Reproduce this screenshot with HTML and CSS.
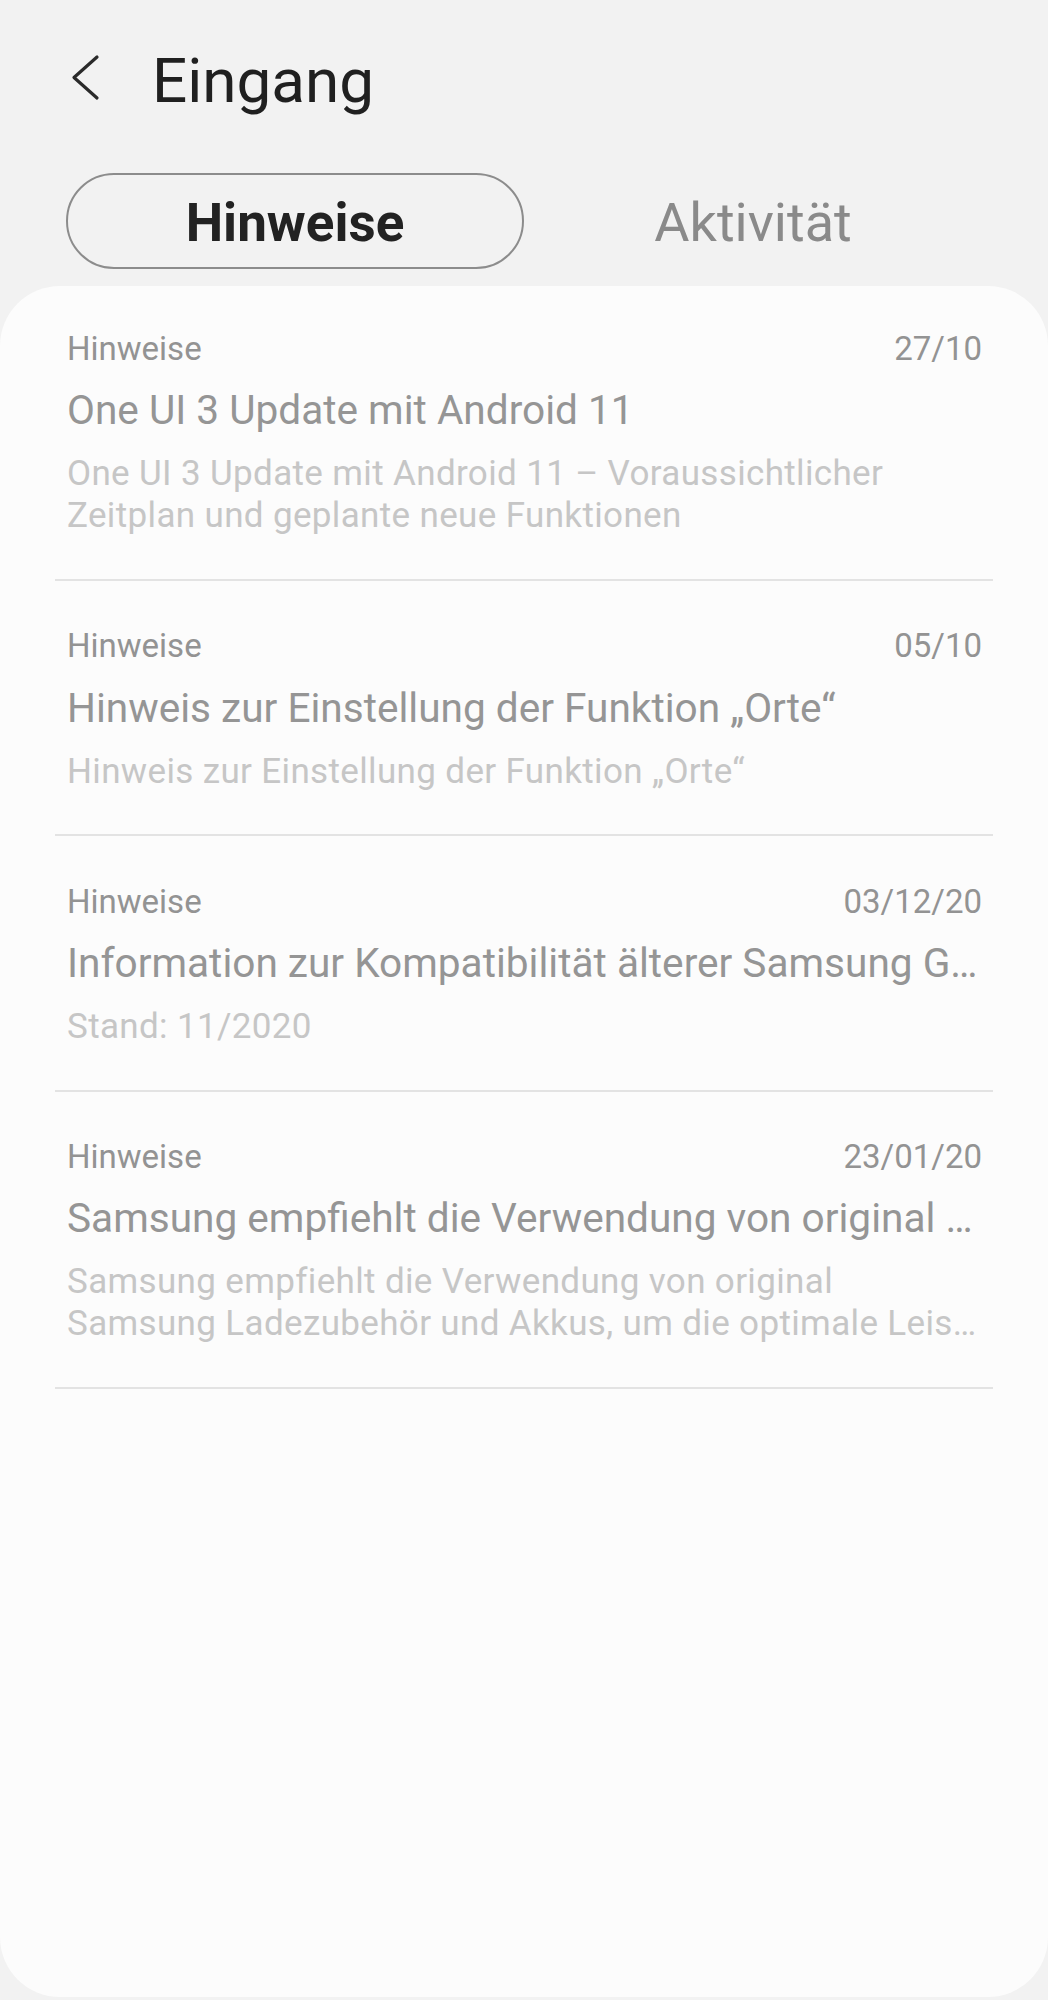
FILE: index.html
```html
<!DOCTYPE html>
<html lang="de">
<head>
<meta charset="utf-8">
<title>Eingang</title>
<link rel="stylesheet" href="styles.css">
</head>
<body>
<div class="app">
  <header class="header">
    <svg class="back" width="40" height="72" viewBox="0 0 40 72" aria-hidden="true">
      <polyline points="31,11 8,31.5 31,52" fill="none" stroke="#2a2a2a" stroke-width="3.2" stroke-linecap="round" stroke-linejoin="round"/>
    </svg>
    <h1 class="title">Eingang</h1>
  </header>

  <nav class="tabs">
    <div class="tab tab-active">Hinweise</div>
    <div class="tab">Aktivität</div>
  </nav>

  <main class="card">
    <ul class="list">
      <li class="item">
        <div class="meta"><span>Hinweise</span><span>27/10</span></div>
        <div class="item-title">One UI 3 Update mit Android 11</div>
        <div class="desc">
          <div class="line">One UI 3 Update mit Android 11 – Voraussichtlicher</div>
          <div class="line">Zeitplan und geplante neue Funktionen</div>
        </div>
      </li>
      <li class="item">
        <div class="meta"><span>Hinweise</span><span>05/10</span></div>
        <div class="item-title">Hinweis zur Einstellung der Funktion „Orte“</div>
        <div class="desc">
          <div class="line">Hinweis zur Einstellung der Funktion „Orte“</div>
        </div>
      </li>
      <li class="item">
        <div class="meta"><span>Hinweise</span><span>03/12/20</span></div>
        <div class="item-title">Information zur Kompatibilität älterer Samsung G…</div>
        <div class="desc">
          <div class="line">Stand: 11/2020</div>
        </div>
      </li>
      <li class="item">
        <div class="meta"><span>Hinweise</span><span>23/01/20</span></div>
        <div class="item-title">Samsung empfiehlt die Verwendung von original …</div>
        <div class="desc">
          <div class="line">Samsung empfiehlt die Verwendung von original</div>
          <div class="line">Samsung Ladezubehör und Akkus, um die optimale Leis…</div>
        </div>
      </li>
    </ul>
  </main>
</div>
</body>
</html>
```

FILE: styles.css
```css
* {
  box-sizing: border-box;
}

html, body {
  margin: 0;
  padding: 0;
  background: #f2f2f2;
}

body {
  font-family: Roboto, "Noto Sans", "Liberation Sans", sans-serif;
}

.app {
  width: 1048px;
  height: 2000px;
  display: flex;
  flex-direction: column;
}

.header {
  display: flex;
  align-items: flex-start;
  gap: 46px;
  padding: 45px 0 0 66px;
}

.back {
  display: block;
  flex: none;
  margin-top: 1px;
}

.title {
  margin: 0;
  font-size: 62px;
  line-height: 72px;
  font-weight: 400;
  color: #202020;
}

.tabs {
  display: grid;
  grid-template-columns: 1fr 1fr;
  padding: 0 66px;
  margin-top: 55px;
}

.tab {
  height: 96px;
  padding-top: 4px;
  line-height: 88px;
  text-align: center;
  font-size: 54px;
  color: #8a8a8a;
  border: 2px solid transparent;
  border-radius: 48px;
}

.tab-active {
  border-color: #8c8c8c;
  color: #222222;
  font-weight: 700;
  font-size: 53px;
}

.card {
  flex: 1;
  margin: 17px 0 3px;
  background: #fcfcfc;
  border-radius: 60px;
}

.list {
  list-style: none;
  margin: 0;
  padding: 0 55px;
}

.item {
  padding: 45.5px 11px 41.6px 12px;
  border-bottom: 2px solid #e3e3e3;
}

.item:first-child {
  padding-top: 43px;
}

.meta {
  display: flex;
  justify-content: space-between;
  font-size: 33px;
  line-height: 40px;
  color: #939393;
}

.item-title {
  margin-top: 16.3px;
  font-size: 40.6px;
  line-height: 50px;
  color: #959595;
  white-space: nowrap;
  overflow: hidden;
  text-overflow: ellipsis;
}

.desc {
  margin-top: 18px;
  font-size: 35px;
  line-height: 42px;
  letter-spacing: 0.35px;
  color: #c6c6c6;
}

.line {
  white-space: nowrap;
  overflow: hidden;
  text-overflow: ellipsis;
}
```
